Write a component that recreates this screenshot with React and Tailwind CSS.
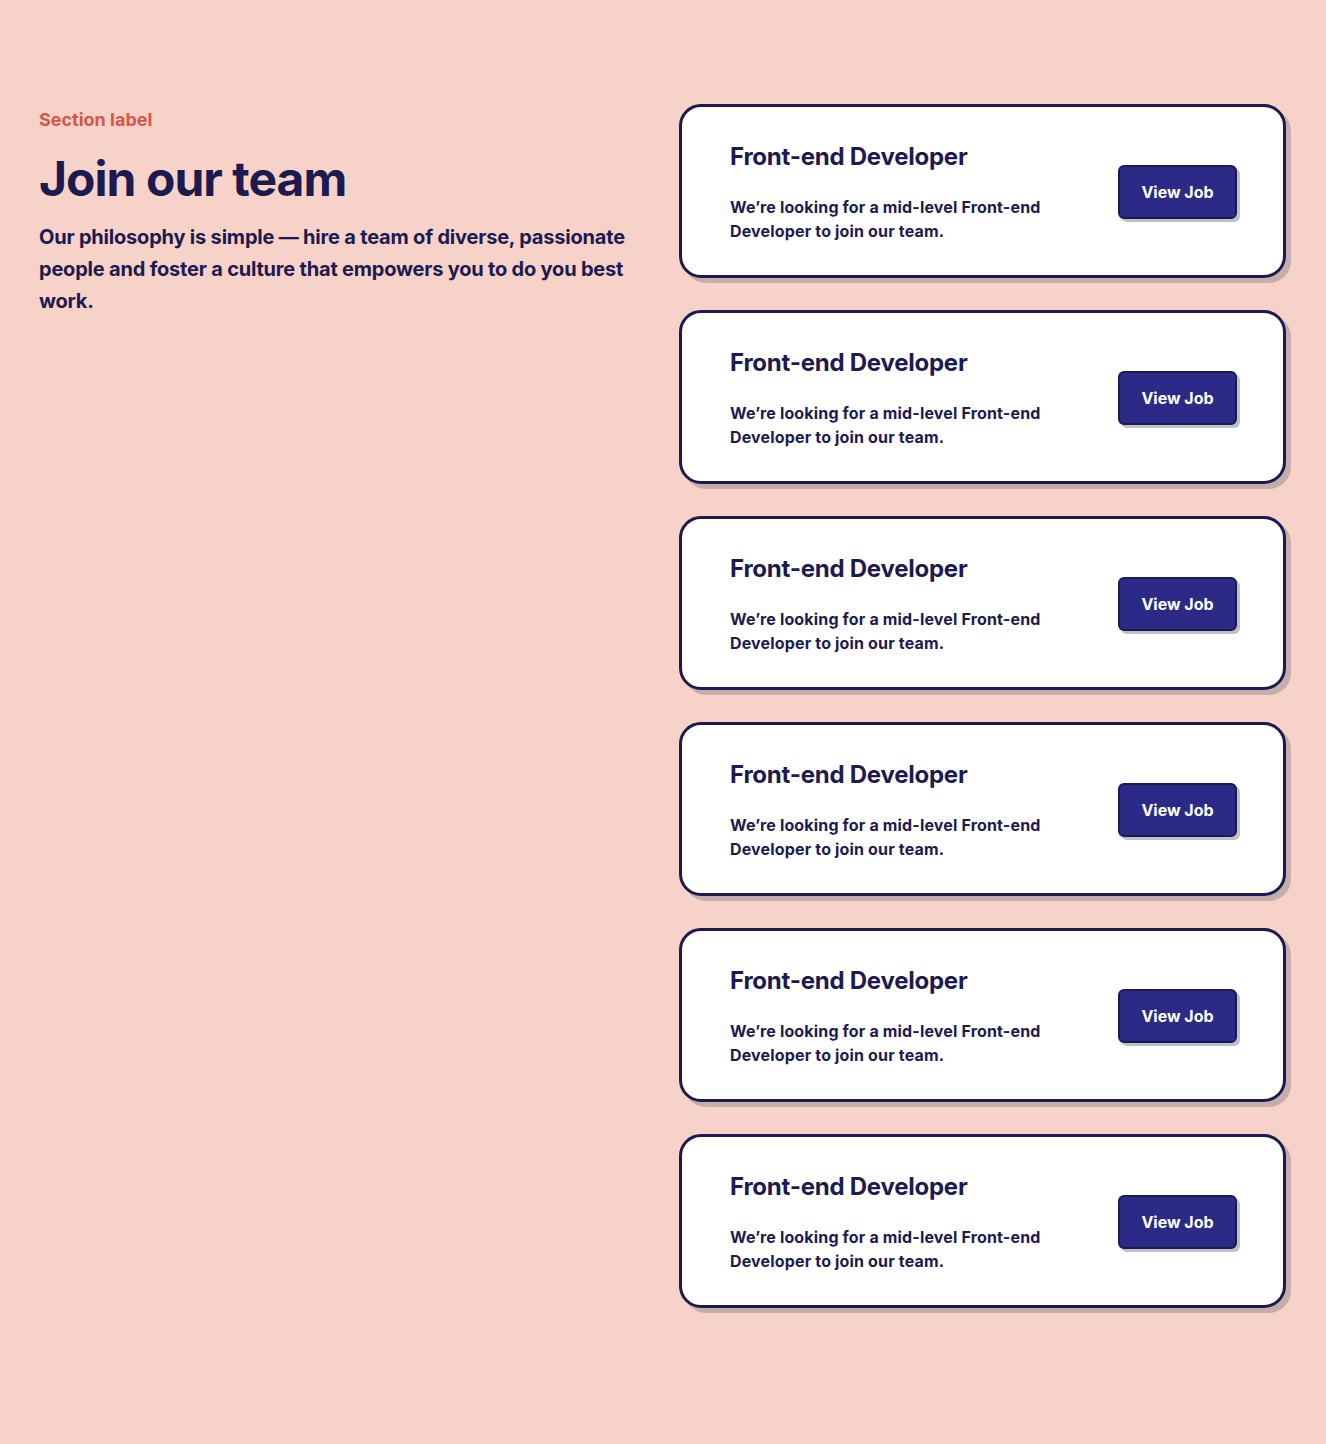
const jobs = Array.from({ length: 6 }, (_, i) => ({
  id: i,
  title: "Front-end Developer",
  text: "We’re looking for a mid-level Front-end Developer to join our team.",
}));

function JobCard({ title, text }) {
  return (
    <div className="flex items-center justify-between rounded-[22px] border-[3px] border-[#1c1a4f] bg-white pt-[34px] pb-8 pl-12 pr-[46px] shadow-[5px_5px_0_0_#c4aeac]">
      <div className="max-w-[340px]">
        <h3 className="text-2xl font-bold leading-8 tracking-[-0.01em] text-[#1c1a4f]">{title}</h3>
        <p className="mt-[22px] text-base font-bold leading-6 tracking-[0.01em] text-[#1c1a4f]">{text}</p>
      </div>
      <button className="h-[54px] w-[119px] rounded-md border-2 border-[#1c1a4f] bg-[#2b2a86] text-base font-bold text-white shadow-[3px_3px_0_0_#bcc3c8]">
        View Job
      </button>
    </div>
  );
}

export default function App() {
  return (
    <div
      className="min-h-screen bg-[#f6d2c9] pl-[39px] pr-10 pt-[104px] pb-[132px]"
      style={{ fontFamily: "Inter, 'Noto Sans', sans-serif" }}
    >
      <div className="grid grid-cols-2 gap-[33px]">
        <div>
          <div className="mt-[2px] text-lg font-bold leading-7 text-[#d3574b]">Section label</div>
          <h1 className="mt-[17px] text-5xl font-bold leading-[56px] tracking-[-0.02em] text-[#1c1a4f]">Join our team</h1>
          <p className="mt-[14px] max-w-[600px] text-xl font-bold leading-8 tracking-[-0.01em] text-[#1c1a4f]">
            Our philosophy is simple — hire a team of diverse, passionate people and foster a culture that empowers you to do you best work.
          </p>
        </div>
        <div className="flex flex-col gap-8">
          {jobs.map((j) => (
            <JobCard key={j.id} title={j.title} text={j.text} />
          ))}
        </div>
      </div>
    </div>
  );
}
